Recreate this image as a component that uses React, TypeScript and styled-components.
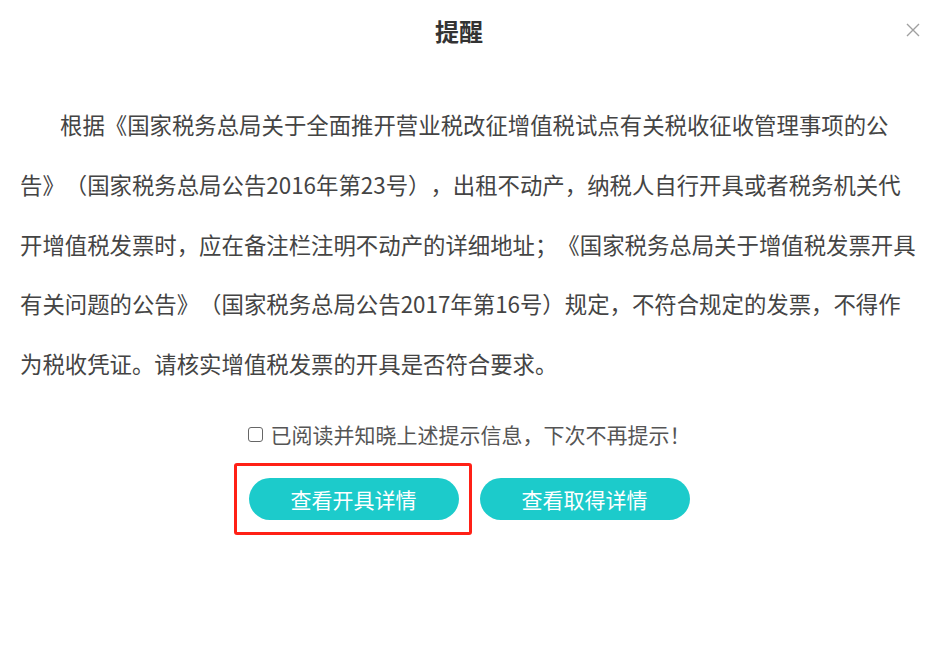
import React from "react";
import styled, { createGlobalStyle } from "styled-components";

const Global = createGlobalStyle`
  html, body { margin: 0; padding: 0; background: #fff; }
  body {
    font-family: "Microsoft YaHei", "Noto Sans CJK SC", "Noto Sans", sans-serif;
    text-spacing-trim: space-all;
  }
  * { box-sizing: border-box; }
`;

const Dialog = styled.div`
  width: 938px;
  height: 645px;
  background: #fff;
  display: flex;
  flex-direction: column;
`;

const Header = styled.div`
  position: relative;
  height: 62px;
  padding-right: 20px;
  display: flex;
  align-items: center;
  justify-content: center;
`;

const Title = styled.h2`
  margin: 0;
  font-size: 24px;
  font-weight: 700;
  color: #333;
  line-height: 1;
`;

const Close = styled.button`
  position: absolute;
  right: 17px;
  top: 22px;
  width: 16px;
  height: 16px;
  padding: 0;
  border: 0;
  background: transparent;
  cursor: pointer;
  display: flex;
  align-items: center;
  justify-content: center;
`;

const Body = styled.p`
  margin: 33px 0 0;
  padding: 0 20px;
  font-size: 22.4px;
  line-height: 59.8px;
  color: #444;
  text-indent: 40px;
  text-spacing-trim: space-all;
`;

const CheckRow = styled.label`
  margin-top: 26px;
  display: flex;
  align-items: center;
  justify-content: center;
  gap: 8px;
  font-size: 21px;
  color: #555;
  line-height: 28px;
  text-spacing-trim: space-all;
`;

const Box = styled.span`
  width: 15px;
  height: 15px;
  border: 1.5px solid #666;
  border-radius: 3px;
  background: #fff;
  margin-top: 1px;
`;

const Buttons = styled.div`
  margin-top: 30px;
  display: flex;
  justify-content: center;
  gap: 21px;
`;

const BtnWrap = styled.div`
  position: relative;
`;

const Highlight = styled.div`
  position: absolute;
  left: -15px;
  right: -13px;
  top: -15px;
  bottom: -15px;
  border: 3px solid #ff2016;
  border-radius: 3px;
  pointer-events: none;
`;

const Btn = styled.button`
  width: 210px;
  height: 42px;
  border: 0;
  border-radius: 21px;
  background: #1ccbcb;
  color: #fff;
  font-family: inherit;
  font-size: 21px;
  cursor: pointer;
  padding: 0;
`;

export default function App() {
  return (
    <>
      <Global />
      <Dialog>
        <Header>
          <Title>提醒</Title>
          <Close aria-label="关闭">
            <svg width="14" height="14" viewBox="0 0 14 14">
              <path d="M1 1L13 13M13 1L1 13" stroke="#a0a0a0" strokeWidth="1.4" />
            </svg>
          </Close>
        </Header>
        <Body>
          根据《国家税务总局关于全面推开营业税改征增值税试点有关税收征收管理事项的公告》（国家税务总局公告2016年第23号），出租不动产，纳税人自行开具或者税务机关代开增值税发票时，应在备注栏注明不动产的详细地址；《国家税务总局关于增值税发票开具有关问题的公告》（国家税务总局公告2017年第16号）规定，不符合规定的发票，不得作为税收凭证。请核实增值税发票的开具是否符合要求。
        </Body>
        <CheckRow>
          <Box />
          已阅读并知晓上述提示信息，下次不再提示！
        </CheckRow>
        <Buttons>
          <BtnWrap>
            <Btn>查看开具详情</Btn>
            <Highlight />
          </BtnWrap>
          <BtnWrap>
            <Btn>查看取得详情</Btn>
          </BtnWrap>
        </Buttons>
      </Dialog>
    </>
  );
}
